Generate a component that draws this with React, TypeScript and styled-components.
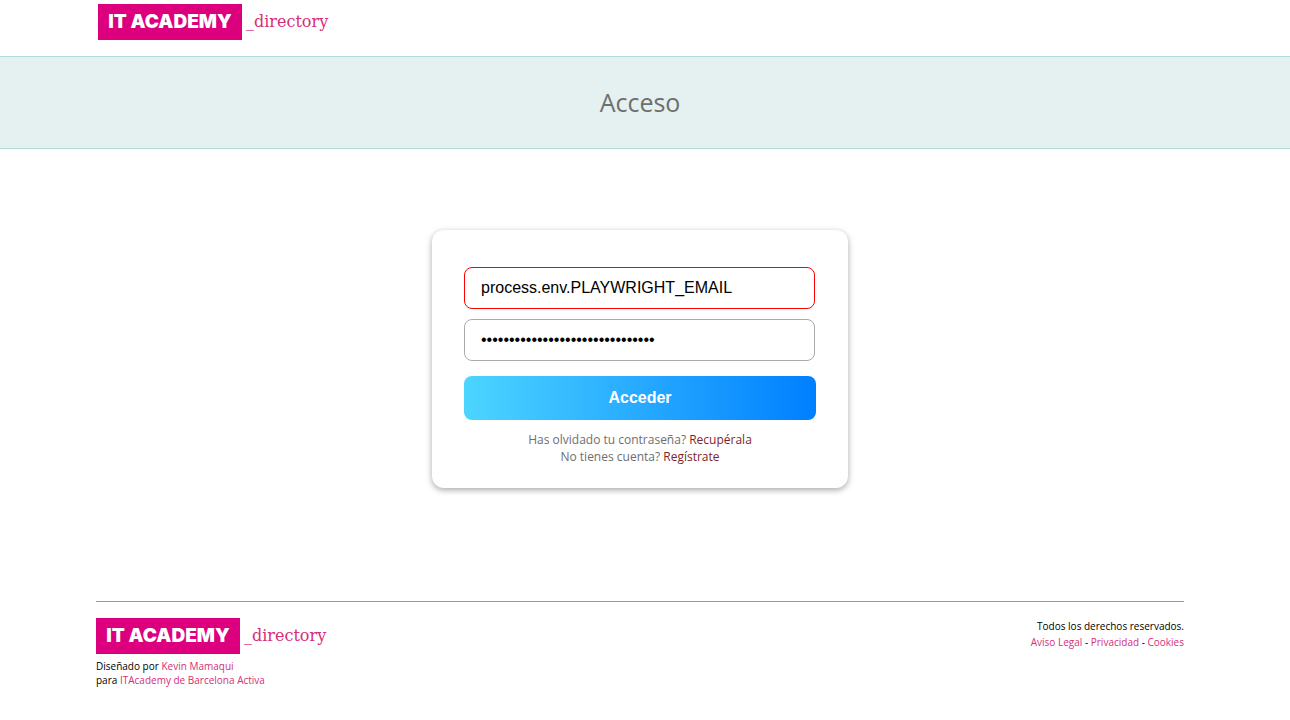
import React, { useState } from "react";
import styled, { createGlobalStyle } from "styled-components";

const GlobalStyle = createGlobalStyle`
  *, *::before, *::after { box-sizing: border-box; }
  body {
    margin: 0;
    background: #fff;
    color: #000;
    font-family: "Open Sans", "Noto Sans", sans-serif;
  }
  a { text-decoration: none; }
`;

const Page = styled.div`
  display: flex;
  flex-direction: column;
  min-height: 100vh;
`;

const Header = styled.header`
  height: 56px;
  padding: 4px 98px;
`;

const LogoLink = styled.a`
  display: inline-flex;
  align-items: center;
  gap: 4px;
  height: 36px;
`;

const LogoMark = styled.span`
  display: flex;
  align-items: center;
  justify-content: center;
  width: 144px;
  height: 36px;
  background: #dc007f;
  color: #fff;
  font: 900 19px/36px Inter, sans-serif;
  white-space: nowrap;
`;

const LogoSuffix = styled.span`
  color: #d62e78;
  font: 400 16px/36px "DejaVu Serif", serif;
`;

const Banner = styled.section`
  display: flex;
  align-items: center;
  justify-content: center;
  height: 93px;
  padding: 0 10px 2px 0;
  background: #e5f0f0;
  border: solid #b0dbda;
  border-width: 1px 0;
`;

const Title = styled.h1`
  margin: 0;
  color: #6e6e6e;
  font-size: 25px;
  font-weight: 400;
  line-height: 36px;
`;

const Main = styled.main`
  display: flex;
  justify-content: center;
  padding: 81px 10px 113px 0;
`;

const Card = styled.form`
  display: flex;
  flex-direction: column;
  width: 416px;
  padding: 37px 32px 23px;
  border-radius: 12px;
  background: #fff;
  box-shadow: 0 2px 6px rgba(0, 0, 0, 0.35);
`;

const Field = styled.input<{ $invalid?: boolean }>`
  width: 351px;
  height: 42px;
  margin: 0 0 10px;
  padding: 0 16px;
  border: 1px solid ${(p) => (p.$invalid ? "#f00" : "#aaa")};
  border-radius: 8px;
  outline: none;
  background: #fff;
  color: #000;
  font: 16px "Liberation Sans", Arial, sans-serif;
`;

const Submit = styled.button`
  height: 44px;
  margin: 5px 0 11px;
  border: 0;
  border-radius: 8px;
  background: linear-gradient(90deg, #4dd5ff, #007fff);
  color: #fff;
  font: 700 16px "Liberation Sans", Arial, sans-serif;
  cursor: pointer;
`;

const Hint = styled.p`
  margin: 0;
  color: #6e6e6e;
  font-size: 12px;
  line-height: 17px;
  text-align: center;
`;

const HintLink = styled.a`
  color: #7e1f2b;
`;

const Footer = styled.footer`
  display: flex;
  justify-content: space-between;
  margin: 0 106px 0 96px;
  padding-top: 16px;
  border-top: 1px solid #999;
  font-size: 10px;
`;

const Credits = styled.p`
  margin: 5px 0 0;
  line-height: 14px;
`;

const Legal = styled.div`
  line-height: 16px;
  text-align: right;
`;

const FooterLink = styled.a`
  color: #d62e78;
`;

function Logo() {
  return (
    <LogoLink href="#" aria-label="IT Academy directory">
      <LogoMark>IT ACADEMY</LogoMark>
      <LogoSuffix>_directory</LogoSuffix>
    </LogoLink>
  );
}

export default function App() {
  const [email, setEmail] = useState("process.env.PLAYWRIGHT_EMAIL");
  const [password, setPassword] = useState("process.env.PLAYWRIGHT_PASSWORD");

  return (
    <Page>
      <GlobalStyle />
      <Header>
        <Logo />
      </Header>
      <Banner>
        <Title>Acceso</Title>
      </Banner>
      <Main>
        <Card onSubmit={(e) => e.preventDefault()}>
          <Field
            $invalid
            type="text"
            aria-label="Email"
            aria-invalid="true"
            value={email}
            onChange={(e) => setEmail(e.target.value)}
          />
          <Field
            type="password"
            aria-label="Contraseña"
            value={password}
            onChange={(e) => setPassword(e.target.value)}
          />
          <Submit type="submit">Acceder</Submit>
          <Hint>
            Has olvidado tu contraseña? <HintLink href="#">Recupérala</HintLink>
          </Hint>
          <Hint>
            No tienes cuenta? <HintLink href="#">Regístrate</HintLink>
          </Hint>
        </Card>
      </Main>
      <Footer>
        <div>
          <Logo />
          <Credits>
            Diseñado por <FooterLink href="#">Kevin Mamaqui</FooterLink>
            <br />
            para <FooterLink href="#">ITAcademy de Barcelona Activa</FooterLink>
          </Credits>
        </div>
        <Legal>
          Todos los derechos reservados.
          <br />
          <FooterLink href="#">Aviso Legal</FooterLink> - <FooterLink href="#">Privacidad</FooterLink> -{" "}
          <FooterLink href="#">Cookies</FooterLink>
        </Legal>
      </Footer>
    </Page>
  );
}
